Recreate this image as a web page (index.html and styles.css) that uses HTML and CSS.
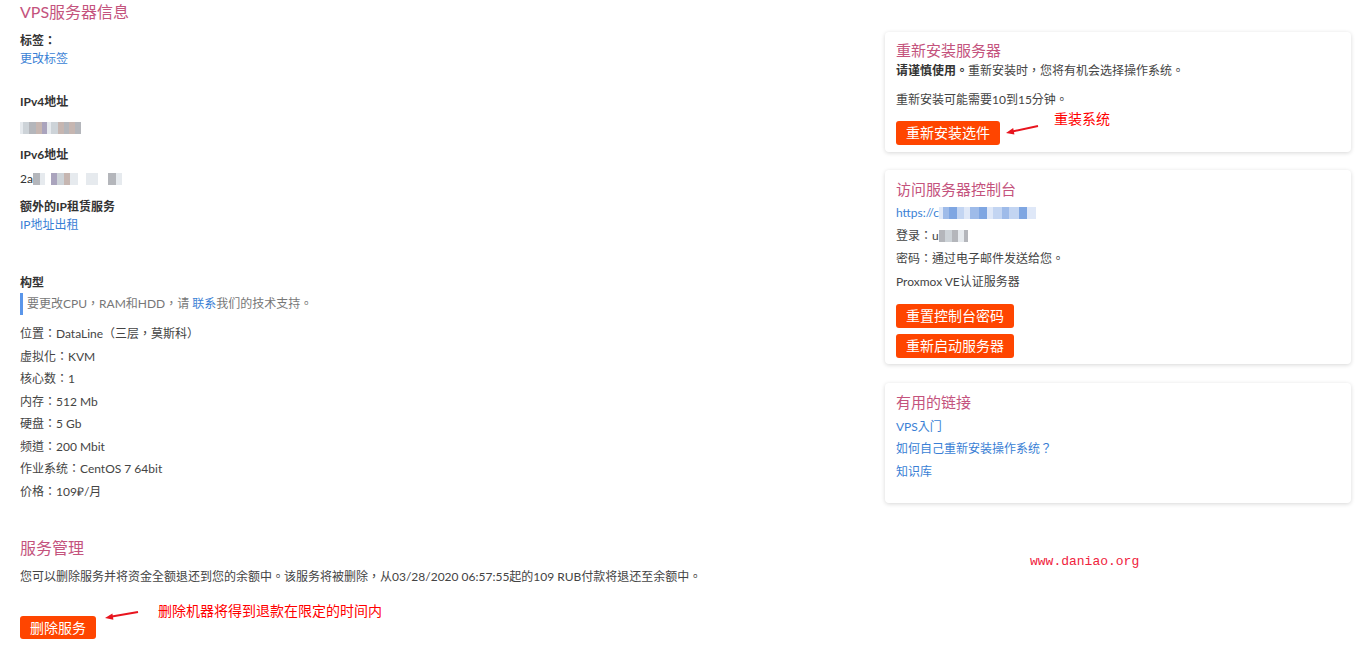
FILE: index.html
```html
<!DOCTYPE html>
<html>
<head>
  <meta charset="utf-8">
  <title>VPS服务器信息</title>
  <link rel="stylesheet" href="styles.css">
</head>
<body>
  <div class="page">
    <div class="main">
      <h1 class="title">VPS服务器信息</h1>

      <div class="field tag">
        <div class="label">标签：</div>
        <a class="link" href="#">更改标签</a>
      </div>

      <div class="field ip4">
        <div class="label">IPv4地址</div>
        <div class="value ip4-value">
          <span class="pix g5 w3"></span><span class="pix g2 w6"></span><span class="pix g1 w7"></span><span class="pix g3 w6"></span><span class="pix g4 w5"></span><span class="pix g5 w4"></span><span class="pix g2 w7"></span><span class="pix g3 w6"></span><span class="pix g1 w5"></span><span class="pix g3 w6"></span><span class="pix g1 w6"></span>
        </div>
      </div>

      <div class="field ip6">
        <div class="label">IPv6地址</div>
        <div class="value ip6-value">2a<span class="pix g1 w7"></span><span class="pix g5 w5"></span><span class="gap w6"></span><span class="pix g4 w6"></span><span class="pix g2 w7"></span><span class="pix g3 w6"></span><span class="pix g5 w8"></span><span class="gap w8"></span><span class="pix g5 w12"></span><span class="gap w10"></span><span class="pix g1 w8"></span><span class="pix g5 w6"></span></div>
      </div>

      <div class="field extra">
        <div class="label">额外的IP租赁服务</div>
        <a class="link" href="#">IP地址出租</a>
      </div>

      <div class="field config">
        <div class="label">构型</div>
        <blockquote class="note">要更改CPU，RAM和HDD，请 <a class="link" href="#">联系</a>我们的技术支持。</blockquote>
      </div>

      <ul class="specs">
        <li>位置：DataLine（三层，莫斯科）</li>
        <li>虚拟化：KVM</li>
        <li>核心数：1</li>
        <li>内存：512 Mb</li>
        <li>硬盘：5 Gb</li>
        <li>频道：200 Mbit</li>
        <li>作业系统：CentOS 7 64bit</li>
        <li>价格：109₽/月</li>
      </ul>

      <div class="manage">
        <h2 class="title">服务管理</h2>
        <p class="manage-text">您可以删除服务并将资金全额退还到您的余额中。该服务将被删除，从03/28/2020 06:57:55起的109 RUB付款将退还至余额中。</p>
        <button class="btn delete">删除服务</button>
      </div>
    </div>

    <aside class="side">
      <div class="card reinstall">
        <h3 class="card-title">重新安装服务器</h3>
        <p class="row warn"><b>请谨慎使用。</b>重新安装时，您将有机会选择操作系统。</p>
        <p class="row later">重新安装可能需要10到15分钟。</p>
        <button class="btn">重新安装选件</button>
      </div>

      <div class="card console">
        <h3 class="card-title">访问服务器控制台</h3>
        <p class="row"><a class="link" href="#">https://c<span class="pix b3 w4"></span><span class="pix b2 w6"></span><span class="pix b4 w8"></span><span class="pix b1 w7"></span><span class="pix b3 w6"></span><span class="pix b2 w9"></span><span class="pix b4 w8"></span><span class="pix b3 w6"></span><span class="pix b1 w9"></span><span class="pix b2 w7"></span><span class="pix b1 w10"></span><span class="pix b4 w8"></span><span class="pix b3 w9"></span></a></p>
        <p class="row">登录：u<span class="pix g1 w6"></span><span class="pix g2 w7"></span><span class="pix g1 w6"></span><span class="pix g5 w6"></span><span class="pix g1 w4"></span></p>
        <p class="row">密码：通过电子邮件发送给您。</p>
        <p class="row">Proxmox VE认证服务器</p>
        <div class="buttons">
          <button class="btn">重置控制台密码</button>
          <button class="btn">重新启动服务器</button>
        </div>
      </div>

      <div class="card links">
        <h3 class="card-title">有用的链接</h3>
        <a class="link row" href="#">VPS入门</a>
        <a class="link row" href="#">如何自己重新安装操作系统？</a>
        <a class="link row" href="#">知识库</a>
      </div>
    </aside>

    <!-- annotations drawn over the screenshot -->
    <span class="mark mark-reinstall">重装系统</span>
    <svg class="arrow arrow-reinstall" width="40" height="18" viewBox="0 0 40 18">
      <line x1="36" y1="6" x2="8" y2="12" stroke="#e8141e" stroke-width="2"/>
      <polygon points="4,13 12.4,14.6 11.2,8" fill="#e8141e"/>
    </svg>
    <span class="mark mark-delete">删除机器将得到退款在限定的时间内</span>
    <svg class="arrow arrow-delete" width="44" height="18" viewBox="0 0 44 18">
      <line x1="38" y1="8" x2="9" y2="13" stroke="#e8141e" stroke-width="2"/>
      <polygon points="5,14 13.4,15.8 12.4,9.4" fill="#e8141e"/>
    </svg>
    <span class="watermark">www.daniao.org</span>
  </div>
</body>
</html>
```

FILE: styles.css
```css
body {
  margin: 0;
  background: #fff;
  color: #444;
  font-family: Lato, "Noto Sans CJK TC", sans-serif;
  font-size: 12px;
}

.page {
  position: relative;
  display: flex;
  align-items: flex-start;
  padding: 0 9px 0 20px;
  height: 645px;
  box-sizing: border-box;
}

.main {
  flex: 1;
}

.title {
  margin: 0;
  font-size: 16px;
  font-weight: normal;
  line-height: 24px;
  color: #c4537d;
}

.label {
  font-weight: bold;
  color: #333;
  line-height: 18px;
}

.link {
  color: #3a7fd5;
  text-decoration: none;
  line-height: 18px;
}

.value {
  line-height: 18px;
  height: 18px;
  color: #333;
}

.tag {
  margin-top: 8px;
}

.ip4 {
  margin-top: 25px;
}

.ip4-value {
  margin-top: 8px;
}

.ip6 {
  margin-top: 9px;
}

.ip6-value {
  margin-top: 6px;
}

.extra {
  margin-top: 10px;
}

.extra .link {
  display: block;
}

.config {
  margin-top: 40px;
}

.note {
  margin: 1px 0 0 0;
  padding: 2px 0 2px 4px;
  border-left: 3px solid #5a96ea;
  color: #777;
  line-height: 18px;
}

.specs {
  list-style: none;
  margin: 8px 0 0 0;
  padding: 0;
}

.specs li {
  line-height: 22.5px;
}

.manage {
  margin-top: 33px;
}

.manage-text {
  margin: 8px 0 0 0;
  line-height: 18px;
}

.btn {
  display: block;
  height: 24px;
  padding: 0 10px;
  border: 0;
  border-radius: 3px;
  background: #ff4500;
  color: #fff;
  font-family: Lato, "Noto Sans CJK TC", sans-serif;
  font-size: 14px;
  line-height: 24px;
  cursor: pointer;
}

.delete {
  margin-top: 30px;
  height: 23px;
  line-height: 23px;
}

/* right column */
.side {
  width: 466px;
  padding-top: 32px;
}

.card {
  background: #fff;
  border-radius: 4px;
  box-shadow: 0 1px 4px rgba(0, 0, 0, 0.16);
  padding: 9px 12px 6px 11px;
  margin-bottom: 19px;
}

.card.reinstall {
  padding-top: 8px;
  padding-bottom: 7px;
  margin-bottom: 18px;
}

.card.links {
  padding-bottom: 22px;
}

.card-title {
  margin: 0;
  font-size: 15px;
  font-weight: normal;
  line-height: 20px;
  color: #c4537d;
}

.row {
  display: block;
  margin: 5px 0 0 0;
  line-height: 18px;
}

.row b {
  color: #333;
}

.warn {
  margin-top: 2px;
}

.later {
  margin-top: 11px;
}

.reinstall .btn {
  margin-top: 12px;
}

.buttons {
  margin-top: 13px;
}

.buttons .btn + .btn {
  margin-top: 6px;
}

.links .row {
  margin-top: 4.5px;
}

.links .row:first-of-type {
  margin-top: 5.5px;
}

/* pixelated blur over private values */
.pix,
.gap {
  display: inline-block;
  height: 12px;
  vertical-align: -2px;
}

.pix {
  filter: blur(0.5px);
}

.w3 { width: 3px; }
.w4 { width: 4px; }
.w5 { width: 5px; }
.w6 { width: 6px; }
.w7 { width: 7px; }
.w8 { width: 8px; }
.w9 { width: 9px; }
.w10 { width: 10px; }
.w12 { width: 12px; }

.g1 { background: #b4b6bb; }
.g2 { background: #cdd3d8; }
.g3 { background: #c6b6b1; }
.g4 { background: #aaa4bd; }
.g5 { background: #e6eaee; }

.b1 { background: #c3d5f2; }
.b2 { background: #9ebbe9; }
.b3 { background: #dfe8f8; }
.b4 { background: #7fa6e2; }

/* annotations */
.mark {
  position: absolute;
  color: #f00;
  font-family: "Noto Sans CJK SC", sans-serif;
  font-size: 14px;
  line-height: 20px;
}

.mark-reinstall {
  left: 1054px;
  top: 108px;
}

.mark-delete {
  left: 158px;
  top: 600px;
}

.arrow {
  position: absolute;
}

.arrow-reinstall {
  left: 1002px;
  top: 120px;
}

.arrow-delete {
  left: 100px;
  top: 604px;
}

.watermark {
  position: absolute;
  left: 1030px;
  top: 553px;
  color: #f0223c;
  font-family: "Liberation Mono", monospace;
  font-size: 13px;
  line-height: 18px;
}
```
